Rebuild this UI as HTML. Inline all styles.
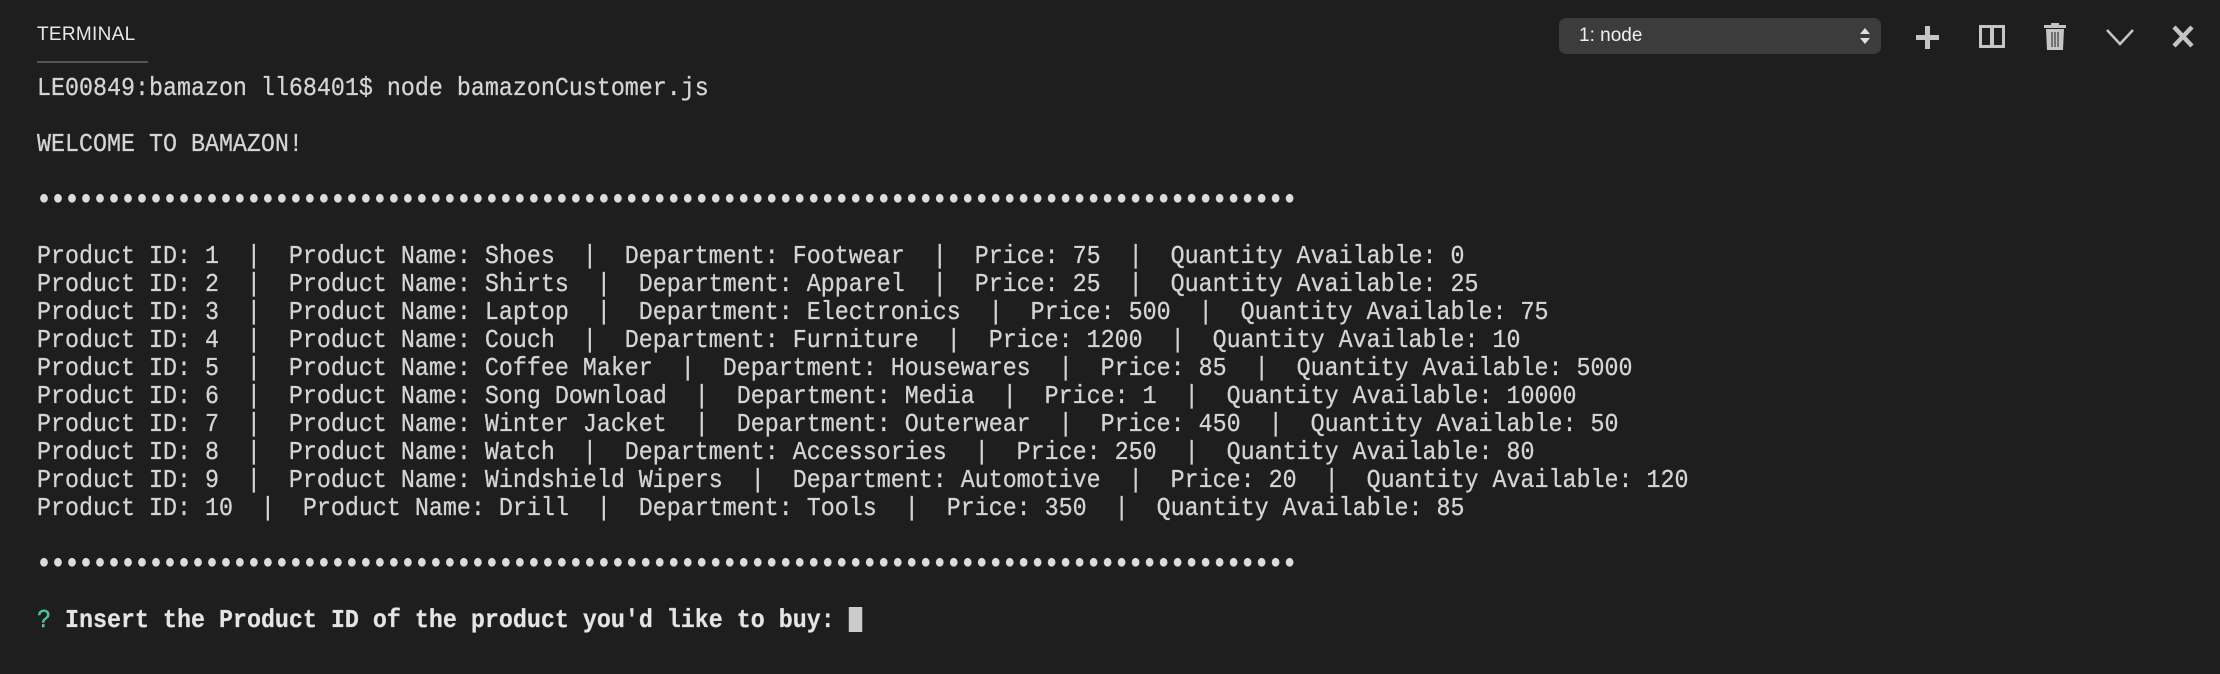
<!DOCTYPE html>
<html><head><meta charset="utf-8"><style>
html,body{margin:0;padding:0;background:#1e1e1e;width:2220px;height:674px;overflow:hidden}
.hdr{position:absolute;left:37px;top:24px;font:19px "Liberation Sans",sans-serif;color:#e7e7e7;letter-spacing:0.3px}
.ul{position:absolute;left:37px;top:61px;width:111px;height:2px;background:#555}
pre{position:absolute;left:37px;top:74px;margin:0;font-family:"Liberation Mono",monospace;font-size:26px;line-height:28px;color:#d4d4d4;transform:scaleX(0.897);transform-origin:0 0;-webkit-text-stroke:0.3px #d4d4d4}
.d{font-weight:bold;color:#dcdcdc;-webkit-text-stroke:1.2px #dcdcdc}
.g{color:#23d18b}
b{font-weight:bold;color:#e5e5e5}
.cur{display:inline-block;width:15px;height:25px;background:#cccccc;vertical-align:-5px}
.sel{position:absolute;left:1559px;top:18px;width:322px;height:36px;background:#3c3c3c;border-radius:7px;font:19px "Liberation Sans",sans-serif;color:#f0f0f0;line-height:36px;box-sizing:border-box;padding-left:20px}
.sel svg{position:absolute;right:10px;top:8px}
.ic{position:absolute;top:22px}
</style></head><body>
<div class="hdr">TERMINAL</div><div class="ul"></div>
<div class="sel">1: node<svg width="12" height="20" viewBox="0 0 12 20"><path d="M6 2L11 8H1Z M6 18L11 12H1Z" fill="#e0e0e0"/></svg></div>
<svg class="ic" style="left:1914px" width="28" height="30" viewBox="0 0 28 30"><path d="M11 4h5v9h9v5h-9v9h-5v-9H2v-5h9z" fill="#c5c5c5"/></svg>
<svg class="ic" style="left:1977px" width="30" height="30" viewBox="0 0 30 30"><path d="M2 3h26v23H2z M5 6v17h8V6z M17 6v17h8V6z" fill="#c5c5c5" fill-rule="evenodd"/></svg>
<svg class="ic" style="left:2042px" width="26" height="30" viewBox="0 0 26 30"><path d="M9 1h8v2h7v3H2V3h7z M4 7h18l-1 21H5z" fill="#c5c5c5"/><path d="M10 10v15M13 10v15M16 10v15" stroke="#1e1e1e" stroke-width="1"/></svg>
<svg class="ic" style="left:2104px" width="32" height="30" viewBox="0 0 32 30"><path d="M3 8l13 14L29 8" fill="none" stroke="#c5c5c5" stroke-width="2.5"/></svg>
<svg class="ic" style="left:2170px" width="26" height="30" viewBox="0 0 26 30"><path d="M4 5l18 19M22 5L4 24" stroke="#c5c5c5" stroke-width="4.5"/></svg>
<pre>LE00849:bamazon ll68401$ node bamazonCustomer.js

WELCOME TO BAMAZON!

<span class="d">••••••••••••••••••••••••••••••••••••••••••••••••••••••••••••••••••••••••••••••••••••••••••</span>

Product ID: 1  |  Product Name: Shoes  |  Department: Footwear  |  Price: 75  |  Quantity Available: 0
Product ID: 2  |  Product Name: Shirts  |  Department: Apparel  |  Price: 25  |  Quantity Available: 25
Product ID: 3  |  Product Name: Laptop  |  Department: Electronics  |  Price: 500  |  Quantity Available: 75
Product ID: 4  |  Product Name: Couch  |  Department: Furniture  |  Price: 1200  |  Quantity Available: 10
Product ID: 5  |  Product Name: Coffee Maker  |  Department: Housewares  |  Price: 85  |  Quantity Available: 5000
Product ID: 6  |  Product Name: Song Download  |  Department: Media  |  Price: 1  |  Quantity Available: 10000
Product ID: 7  |  Product Name: Winter Jacket  |  Department: Outerwear  |  Price: 450  |  Quantity Available: 50
Product ID: 8  |  Product Name: Watch  |  Department: Accessories  |  Price: 250  |  Quantity Available: 80
Product ID: 9  |  Product Name: Windshield Wipers  |  Department: Automotive  |  Price: 20  |  Quantity Available: 120
Product ID: 10  |  Product Name: Drill  |  Department: Tools  |  Price: 350  |  Quantity Available: 85

<span class="d">••••••••••••••••••••••••••••••••••••••••••••••••••••••••••••••••••••••••••••••••••••••••••</span>

<span class="g">?</span> <b>Insert the Product ID of the product you'd like to buy:</b> <span class="cur"></span></pre>
</body></html>
